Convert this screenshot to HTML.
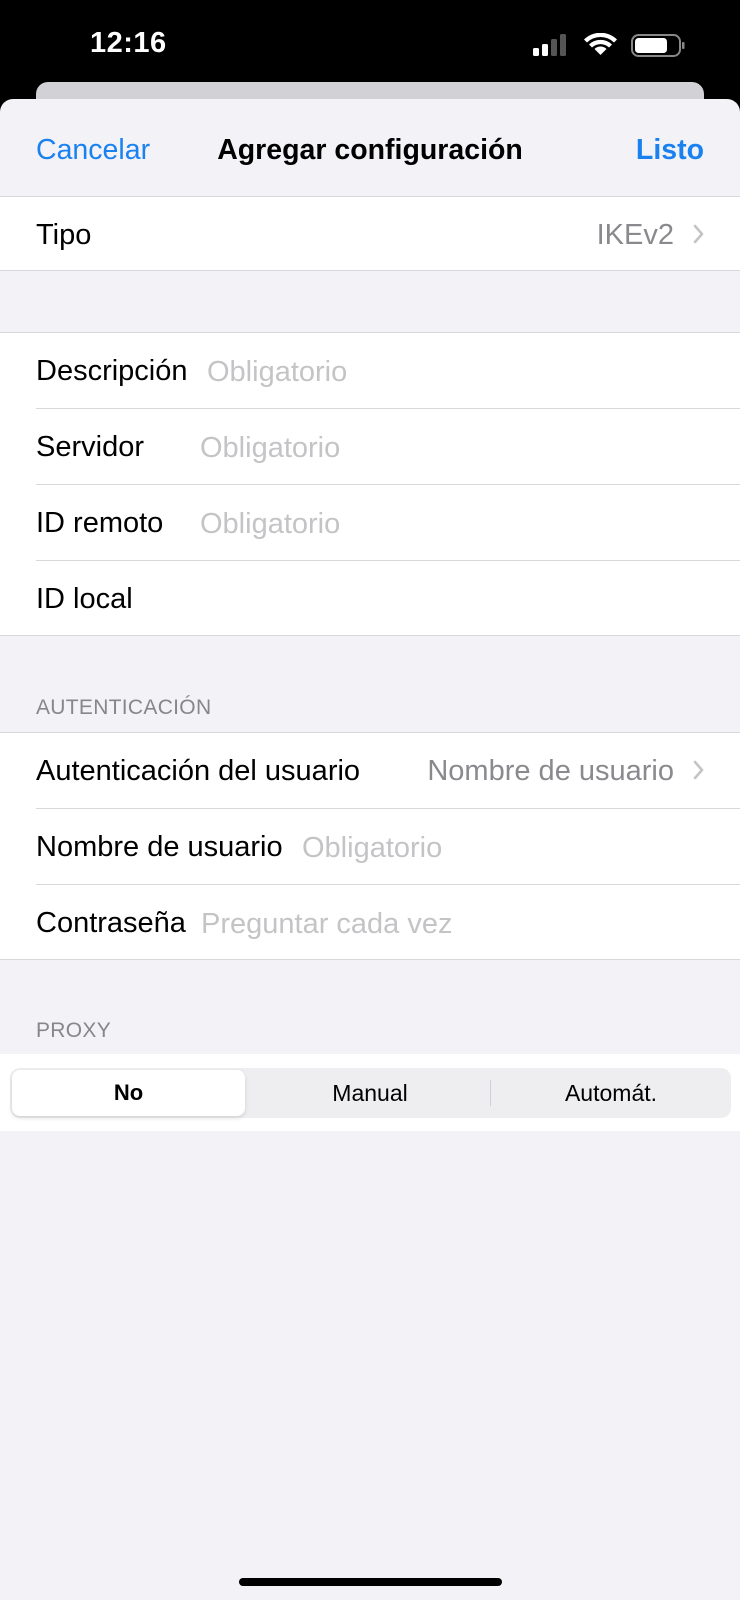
<!DOCTYPE html>
<html><head><meta charset="utf-8"><style>
*{margin:0;padding:0;box-sizing:border-box}
body{width:740px;height:1600px;background:#000;font-family:"Liberation Sans",sans-serif;position:relative;overflow:hidden}
.abs{position:absolute}
.sheet{position:absolute;left:0;top:99px;width:740px;height:1501px;background:#f2f2f7;border-radius:13px 13px 0 0}
.back{position:absolute;left:36px;top:82px;width:668px;height:40px;background:#d1d1d6;border-radius:12px}
.row{position:absolute;left:0;width:740px;background:#fff}
.t{position:absolute;font-size:29px;color:#000;white-space:nowrap;line-height:30px;margin-top:1px}
.ph{color:#c4c4c7}
.sep{position:absolute;height:1px;background:#d8d8dc}
.hdr{position:absolute;left:36px;font-size:21px;color:#86868b;letter-spacing:.3px}
</style></head><body>
<div class="abs" style="left:90px;top:27px;color:#fff;font-size:29px;font-weight:bold;letter-spacing:.5px">12:16</div>
<svg class="abs" style="left:530px;top:33px" width="160" height="30" viewBox="0 0 160 30">
<rect x="3" y="15" width="6" height="8" rx="1.5" fill="#fff"/><rect x="12" y="11" width="6" height="12" rx="1.5" fill="#fff"/><rect x="21" y="6" width="6" height="17" rx="1.5" fill="#555"/><rect x="30" y="1" width="6" height="22" rx="1.5" fill="#555"/>
<g transform="translate(70.5,0)">
<path d="M0 22 L-6 16 A8.5 8.5 0 0 1 6 16 Z" fill="#fff"/><path d="M-11.5 11.5 A16.5 16.5 0 0 1 11.5 11.5 L8.5 14.5 A12.3 12.3 0 0 0 -8.5 14.5 Z" fill="#fff"/><path d="M-16.5 6.5 A23.5 23.5 0 0 1 16.5 6.5 L13.5 9.5 A19.3 19.3 0 0 0 -13.5 9.5 Z" fill="#fff"/>
</g>
<rect x="102" y="2" width="48" height="21" rx="6.5" fill="none" stroke="#888" stroke-width="2"/><rect x="105" y="5" width="32" height="15" rx="3.5" fill="#fff"/><rect x="152" y="9" width="2.5" height="7" rx="1" fill="#888"/>
</svg>
<div class="back"></div>
<div class="sheet"></div>
<div class="t" style="left:36px;top:134px;color:#1a82f0;font-size:28.5px">Cancelar</div>
<div class="t" style="left:0;width:740px;text-align:center;top:134px;font-weight:bold;font-size:28.5px">Agregar configuración</div>
<div class="t" style="right:36px;top:134px;color:#1a82f0;font-weight:bold;font-size:28.5px">Listo</div>

<div class="row" style="top:196px;height:75px;border-top:1px solid #d8d8dc;border-bottom:1px solid #d8d8dc">
<div class="t" style="left:36px;top:22px">Tipo</div>
<div class="t" style="right:66px;top:22px;color:#8a8a8e">IKEv2</div>
<svg class="abs" style="left:692px;top:26px" width="14" height="22"><path d="M3 3 L10 11 L3 19" fill="none" stroke="#c4c4c7" stroke-width="2.6" stroke-linecap="round" stroke-linejoin="round"/></svg>
</div>

<div class="row" style="top:332px;height:304px;border-top:1px solid #d8d8dc;border-bottom:1px solid #d8d8dc">
<div class="t" style="left:36px;top:22px">Descripción</div><div class="t ph" style="left:207px;top:23px">Obligatorio</div>
<div class="sep" style="left:36px;right:0;top:75px"></div>
<div class="t" style="left:36px;top:98px">Servidor</div><div class="t ph" style="left:200px;top:99px">Obligatorio</div>
<div class="sep" style="left:36px;right:0;top:151px"></div>
<div class="t" style="left:36px;top:174px">ID remoto</div><div class="t ph" style="left:200px;top:175px">Obligatorio</div>
<div class="sep" style="left:36px;right:0;top:227px"></div>
<div class="t" style="left:36px;top:250px">ID local</div>
</div>

<div class="hdr" style="top:696px">AUTENTICACIÓN</div>
<div class="row" style="top:732px;height:228px;border-top:1px solid #d8d8dc;border-bottom:1px solid #d8d8dc">
<div class="t" style="left:36px;top:22px">Autenticación del usuario</div>
<div class="t" style="right:66px;top:22px;color:#8a8a8e">Nombre de usuario</div>
<svg class="abs" style="left:692px;top:26px" width="14" height="22"><path d="M3 3 L10 11 L3 19" fill="none" stroke="#c4c4c7" stroke-width="2.6" stroke-linecap="round" stroke-linejoin="round"/></svg>
<div class="sep" style="left:36px;right:0;top:75px"></div>
<div class="t" style="left:36px;top:98px">Nombre de usuario</div><div class="t ph" style="left:302px;top:99px">Obligatorio</div>
<div class="sep" style="left:36px;right:0;top:151px"></div>
<div class="t" style="left:36px;top:174px">Contraseña</div><div class="t ph" style="left:201px;top:175px">Preguntar cada vez</div>
</div>

<div class="hdr" style="top:1019px">PROXY</div>
<div class="row" style="top:1054px;height:77px">
<div class="abs" style="left:10px;top:14px;width:721px;height:50px;background:#eeeef0;border-radius:10px">
<div class="abs" style="left:2px;top:2px;width:233px;height:46px;background:#fff;border-radius:8px;box-shadow:0 2px 5px rgba(0,0,0,.12)"></div>
<div class="abs" style="left:480px;top:12px;width:1px;height:26px;background:#d0d0d4"></div>
<div class="abs" style="left:2px;width:233px;top:11px;text-align:center;font-size:22px;font-weight:bold;line-height:28px">No</div>
<div class="abs" style="left:240px;width:240px;top:11px;text-align:center;font-size:23px;line-height:28px">Manual</div>
<div class="abs" style="left:481px;width:240px;top:11px;text-align:center;font-size:23px;line-height:28px">Automát.</div>
</div>
</div>

<div class="abs" style="left:239px;top:1578px;width:263px;height:8px;background:#000;border-radius:4px"></div>
</body></html>
